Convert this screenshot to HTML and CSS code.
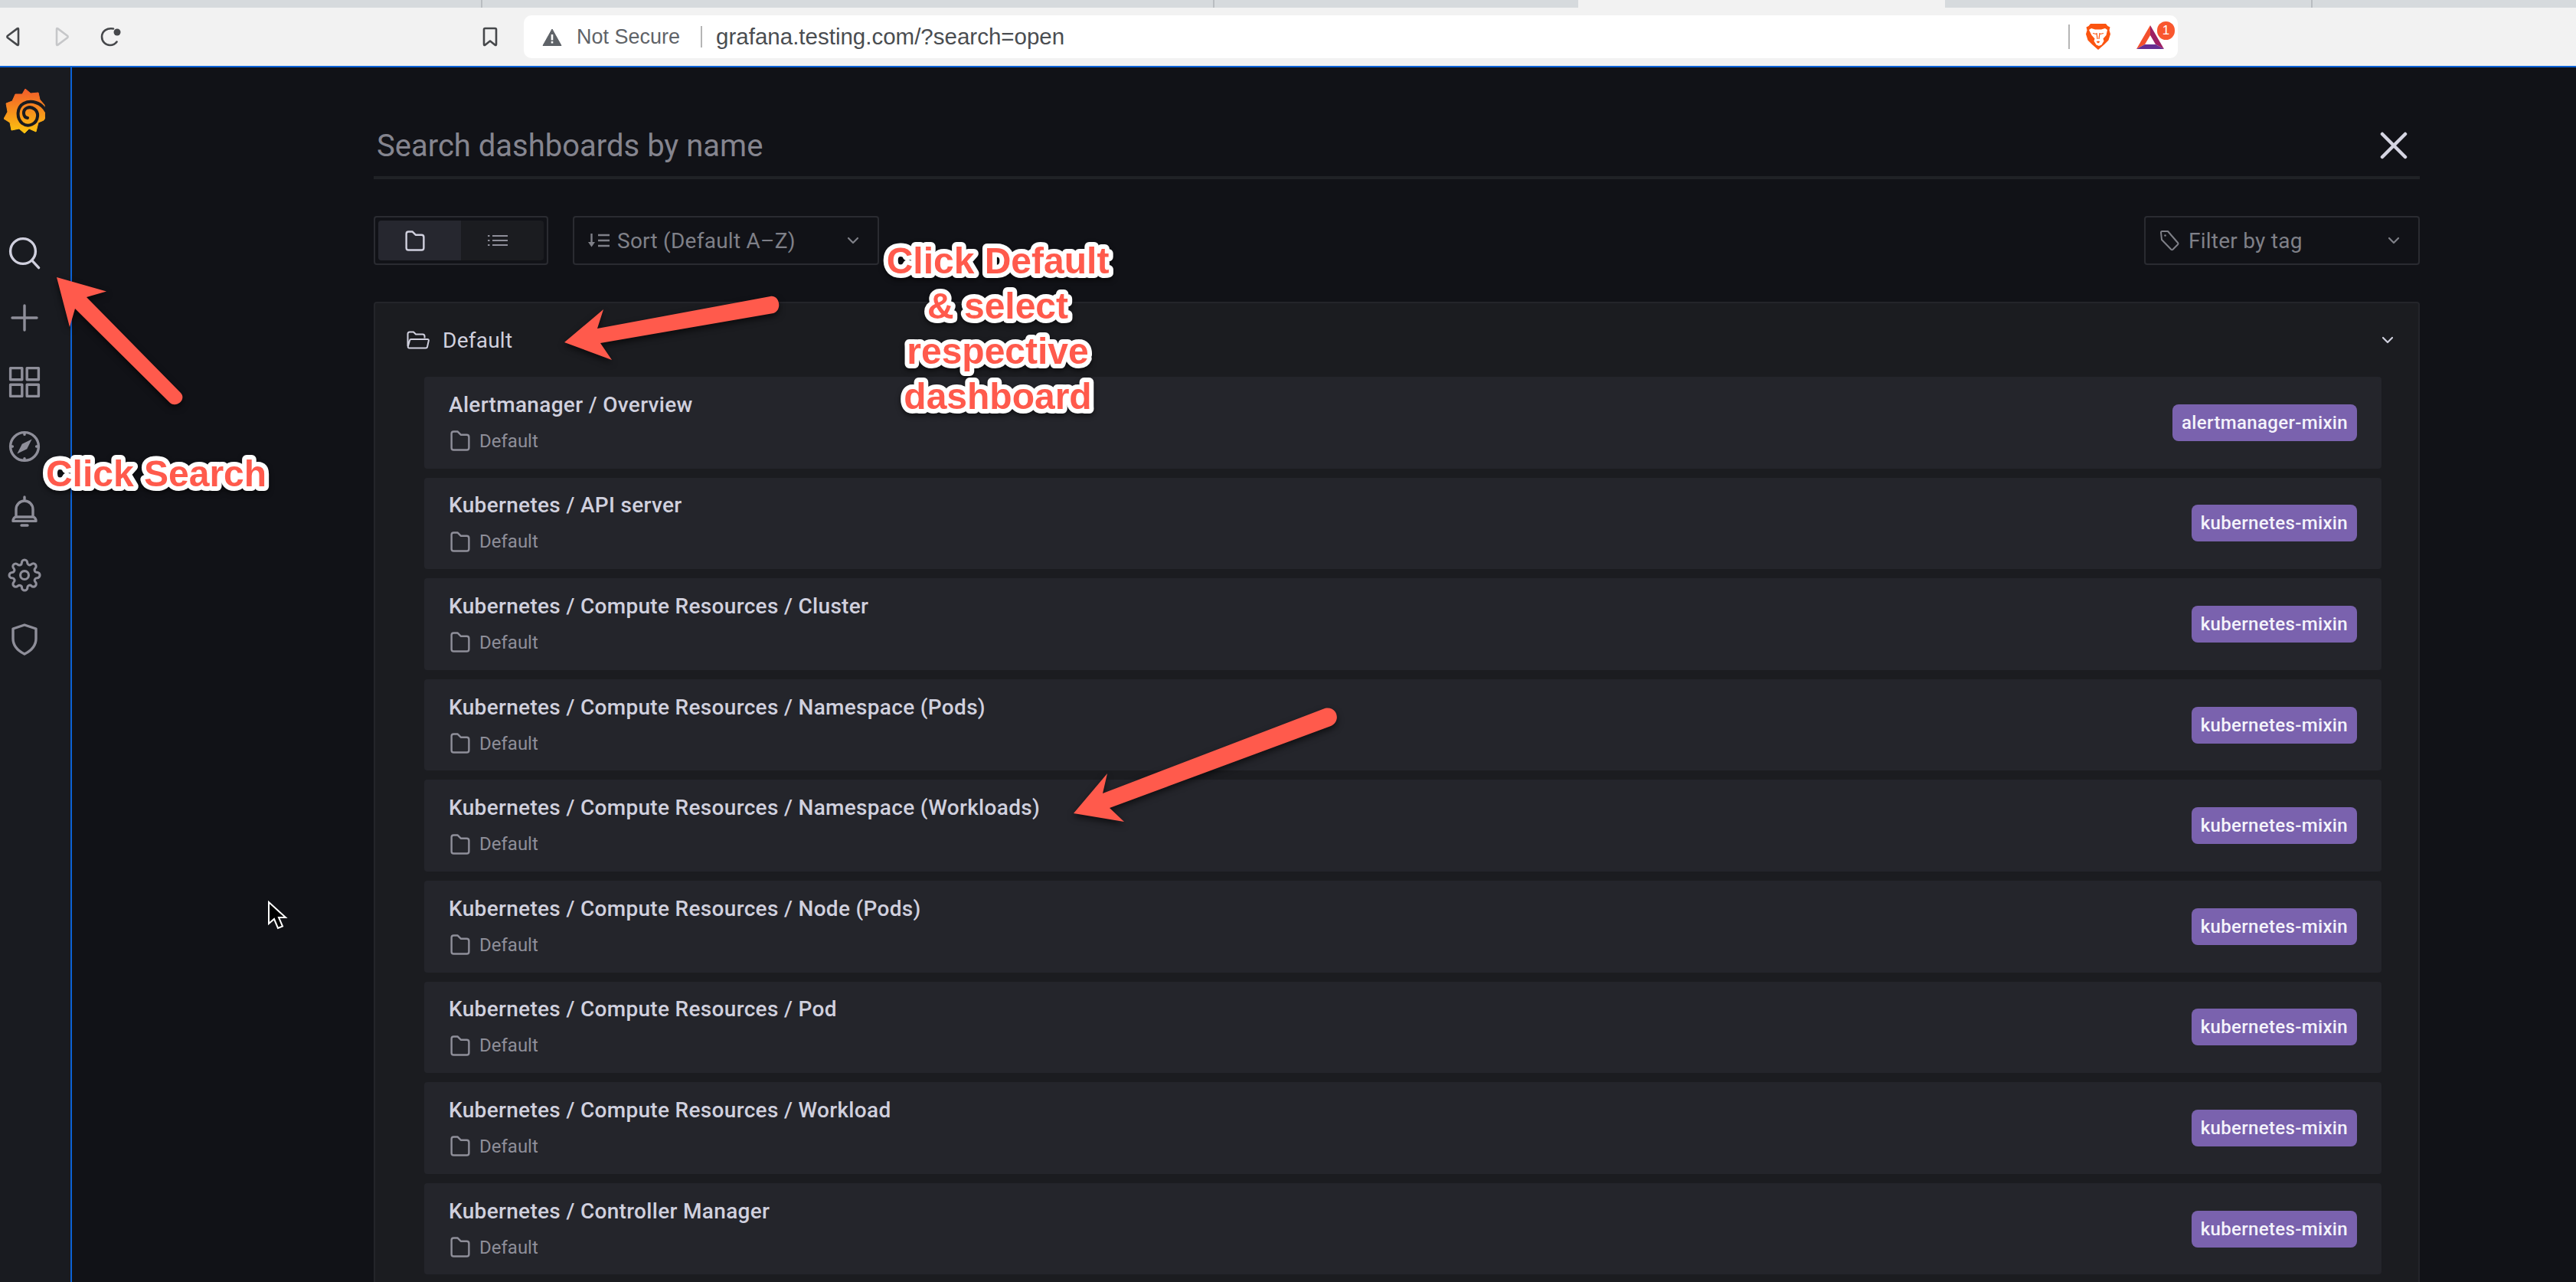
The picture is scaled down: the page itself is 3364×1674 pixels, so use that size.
FILE: index.html
```html
<!DOCTYPE html>
<html lang="en">
<head>
    <meta charset="UTF-8">
    <title>Grafana - Search dashboards</title>
    <link rel="stylesheet" href="styles.css">
</head>
<body>
    <svg class="defs" width="0" height="0">
        <symbol id="folder" viewBox="3 2.5 18 19">
            <path d="M4 5.500c0-1.200.8-2 2-2h3.500l3 3H18c1.200 0 2 .8 2 2v10c0 1.200-.8 2-2 2H6c-1.200 0-2-.8-2-2z" fill="none" stroke="currentColor" stroke-width="1.700" stroke-linejoin="round"/>
        </symbol>
        <symbol id="chevron" viewBox="0 0 16 10">
            <path d="M2 2l6 6 6-6" fill="none" stroke="currentColor" stroke-width="2.200" stroke-linecap="round" stroke-linejoin="round"/>
        </symbol>
    </svg>

    <!-- browser chrome -->
    <div class="tabstrip">
        <div class="tab tab-a"></div>
        <div class="tab tab-b"></div>
        <div class="tab tab-c"></div>
        <div class="tab tab-active"></div>
        <div class="tab tab-d"></div>
        <div class="tab tab-e"></div>
    </div>
    <div class="toolbar">
        <svg class="nav-icon back" viewBox="0 0 20 26"><path d="M17 3v20c0 1-.8 1.200-1.500.6L3 14.200c-.8-.7-.8-1.700 0-2.400L15.500 2.400C16.200 1.800 17 2 17 3z" fill="none" stroke="currentColor" stroke-width="2.600" stroke-linejoin="round"/></svg>
        <svg class="nav-icon forward" viewBox="0 0 20 26"><path d="M3 3v20c0 1 .8 1.200 1.500.6L17 14.200c.8-.7.8-1.700 0-2.400L4.500 2.400C3.800 1.800 3 2 3 3z" fill="none" stroke="currentColor" stroke-width="2.600" stroke-linejoin="round"/></svg>
        <svg class="nav-icon reload" viewBox="0 0 28 26"><path d="M17 2.500C9 1 2 5.500 2 13c0 6.500 5 11 10.500 11 4 0 7-1.500 9-4.500" fill="none" stroke="currentColor" stroke-width="2.600" stroke-linecap="round"/><circle cx="22" cy="7" r="4.500" fill="currentColor"/></svg>
        <svg class="nav-icon bookmark" viewBox="0 0 20 26"><path d="M2 3.500C2 2.500 2.500 2 3.500 2h13c1 0 1.500.5 1.500 1.500V23c0 1-.7 1.300-1.500.7L10 18.500l-6.500 5.200C2.700 24.300 2 24 2 23z" fill="none" stroke="currentColor" stroke-width="2.600" stroke-linejoin="round"/></svg>
        <div class="address-bar">
            <svg class="warn-icon" viewBox="0 0 26 23"><path d="M13 1L25 22.500H1z" fill="#5f6368" stroke="#5f6368" stroke-linejoin="round"/><path d="M11.700 8h2.600v7.500h-2.600zM11.700 17h2.600v2.600h-2.600z" fill="#fff"/></svg>
            <span class="not-secure">Not Secure</span>
            <span class="url-sep"></span>
            <span class="url">grafana.testing.com/?search=open</span>
            <span class="ext-sep"></span>
            <svg class="brave-icon" viewBox="0 0 32 36">
                <path d="M6 1h20l2.500 3 3 1.500-1 4 1.500 5-2.500 8-6 6-7.500 6.500-7.500-6.500-6-6L0 14.500l1.500-5-1-4L3.500 4z" fill="#fb5410"/>
                <path d="M7 7l5 1.500h8L25 7l3 2-1.500 7-4 4.500 1 3-3 5-3.500 1.500-3.500-1.500-3-5 1-3-4-4.500L4 9z" fill="#fff"/>
                <path d="M14 13l1 8M18 13l-1 8M9 13.500l4.500 1M23 13.500l-4.500 1" fill="none" stroke="#fb5410" stroke-width="1.200"/>
                <path d="M13.500 24.500l2.500 2 2.500-2-2.500-1z" fill="#fb5410"/>
            </svg>
            <div class="rewards">
                <svg class="bat-icon" viewBox="0 0 36 31">
                    <path d="M18 0L0 31l11-6 7-12z" fill="#f4502d"/>
                    <path d="M18 0v13l7 12 11 6z" fill="#9e1f63"/>
                    <path d="M11 25h14l11 6H0z" fill="#662d91"/>
                </svg>
                <span class="rewards-badge">1</span>
            </div>
        </div>
    </div>

    <div class="app">
        <nav class="sidebar">
            <svg class="logo" viewBox="5 6 54 59">
                <defs>
                    <linearGradient id="logoGrad" x1="0" y1="0" x2="0" y2="1">
                        <stop offset="0" stop-color="#f15b2a"/>
                        <stop offset="1" stop-color="#fcc30f"/>
                    </linearGradient>
                </defs>
                <path d="M33 6l7 6 10-1 2 9 6 7 1 17-2 3-7 3-3 12-9-4-6 6-7-6-10 2-2-10-8-5 5-9-2-11 8-3 4-9h9z" fill="url(#logoGrad)" stroke="url(#logoGrad)" stroke-linejoin="round"/>
                <path d="M60 35C54 24 41 20 31 25 22 30 21 44 29 51 37 57 48 52 49 42 50 34 42 28 35 31 29 34 30 43 36 44" fill="none" stroke="#191b20" stroke-width="4" stroke-linecap="round"/>
            </svg>
            <div class="nav-items">
                <svg class="side-icon active" viewBox="0 0 24 24"><circle cx="11" cy="10.500" r="8.200"/><path d="M17 16.700l4.300 4.600"/></svg>
                <svg class="side-icon" viewBox="0 0 24 24"><path d="M12 4v16M4 12h16"/></svg>
                <svg class="side-icon" viewBox="0 0 24 24"><rect x="2.800" y="2.800" width="7.600" height="7.600"/><rect x="13.600" y="2.800" width="7.600" height="7.600"/><rect x="2.800" y="13.600" width="7.600" height="7.600"/><rect x="13.600" y="13.600" width="7.600" height="7.600"/></svg>
                <svg class="side-icon" viewBox="0 0 24 24"><circle cx="12" cy="12" r="9.200"/><path d="M12 2.800v1.400M12 19.800v1.400M2.800 12h1.400M19.800 12h1.400"/><path class="solid" d="M16.800 7.200l-3.200 6.400-6.400 3.200 3.200-6.400z"/></svg>
                <svg class="side-icon" viewBox="0 0 24 24"><path d="M12 3v1.500M6.500 16v-5a5.500 5.500 0 0 1 11 0v5M4.500 18.700c0-1.500 1-2.700 2-2.700h11c1 0 2 1.200 2 2.700zM10 21.500h4"/></svg>
                <svg class="side-icon" viewBox="0 0 24 24"><g transform="translate(1.100 1.100) scale(.91)"><circle cx="12" cy="12" r="3"/><path d="M19.400 15a1.650 1.650 0 0 0 .33 1.820l.06.06a2 2 0 0 1 0 2.830 2 2 0 0 1-2.830 0l-.06-.06a1.650 1.650 0 0 0-1.820-.33 1.650 1.650 0 0 0-1 1.510V21a2 2 0 0 1-2 2 2 2 0 0 1-2-2v-.09A1.650 1.650 0 0 0 9 19.400a1.650 1.650 0 0 0-1.820.33l-.06.06a2 2 0 0 1-2.830 0 2 2 0 0 1 0-2.830l.06-.06a1.650 1.650 0 0 0 .33-1.820 1.650 1.650 0 0 0-1.510-1H3a2 2 0 0 1-2-2 2 2 0 0 1 2-2h.09A1.650 1.650 0 0 0 4.600 9a1.650 1.650 0 0 0-.33-1.820l-.06-.06a2 2 0 0 1 0-2.830 2 2 0 0 1 2.830 0l.06.06a1.650 1.650 0 0 0 1.820.33H9a1.650 1.650 0 0 0 1-1.510V3a2 2 0 0 1 2-2 2 2 0 0 1 2 2v.09a1.650 1.650 0 0 0 1 1.510 1.650 1.650 0 0 0 1.820-.33l.06-.06a2 2 0 0 1 2.830 0 2 2 0 0 1 0 2.830l-.06.06a1.650 1.650 0 0 0-.33 1.820V9a1.650 1.650 0 0 0 1.510 1H21a2 2 0 0 1 2 2 2 2 0 0 1-2 2h-.09a1.650 1.650 0 0 0-1.510 1z"/></g></svg>
                <svg class="side-icon" viewBox="0 0 24 24"><path d="M12 2.500l7.500 2.500v6.500c0 4.500-3.500 8-7.500 10-4-2-7.500-5.500-7.500-10V5z"/></svg>
            </div>
        </nav>

        <main class="search-page">
            <div class="search-head">
                <span class="search-placeholder">Search dashboards by name</span>
                <svg class="close-icon" viewBox="0 0 36 36"><path d="M3 3l30 30M33 3L3 33" fill="none" stroke="#d5d5e2" stroke-width="4.500" stroke-linecap="round"/></svg>
            </div>

            <div class="filters">
                <div class="layout-switch">
                    <div class="switch-btn switch-on">
                        <svg class="switch-icon"><use href="#folder"/></svg>
                    </div>
                    <div class="switch-btn">
                        <svg class="list-icon" viewBox="0 0 26 16"><path d="M6 2h20M6 8h20M6 14h20" stroke="currentColor" stroke-width="2.200"/><path d="M0 2h2.500M0 8h2.500M0 14h2.500" stroke="currentColor" stroke-width="2.200"/></svg>
                    </div>
                </div>
                <div class="select sort-select">
                    <svg class="sort-icon" viewBox="0 0 28 18"><path d="M4.500 0v13" stroke="currentColor" stroke-width="2.400"/><path d="M0 11h9l-4.500 6.500z" fill="currentColor"/><path d="M13 2h15M13 9h15M13 16h15" stroke="currentColor" stroke-width="2.400"/></svg>
                    <span>Sort (Default A–Z)</span>
                    <svg class="chev"><use href="#chevron"/></svg>
                </div>
                <div class="select tag-select">
                    <svg class="tag-icon" viewBox="0 0 26 28"><path d="M2 3.500C2 2.500 2.500 2 3.500 2H11l13 15c.6.700.6 1.500 0 2.200l-6.500 6.600c-.7.6-1.500.6-2.200 0L3 13z" fill="none" stroke="currentColor" stroke-width="2" stroke-linejoin="round"/><circle cx="7.500" cy="7.500" r="1.300" fill="currentColor"/></svg>
                    <span>Filter by tag</span>
                    <svg class="chev"><use href="#chevron"/></svg>
                </div>
            </div>

            <section class="folder-section">
                <div class="section-head">
                    <svg class="open-folder" viewBox="0 0 30 24"><path d="M1.500 20V4c0-1.500 1-2.500 2.500-2.500h5l3 3h9c1.500 0 2.500 1 2.500 2.500v2.500M6 11h21.500c1 0 1.500.7 1.300 1.700L27 21c-.2 1-1 1.500-2 1.500H3.500c-1.200 0-2-.8-1.700-2L4 12.500C4.200 11.500 5 11 6 11z" fill="none" stroke="currentColor" stroke-width="2" stroke-linejoin="round"/></svg>
                    <span class="section-title">Default</span>
                    <svg class="chev section-chev"><use href="#chevron"/></svg>
                </div>
                <div class="rows">
                    <div class="row">
                        <div class="row-text">
                            <div class="row-title">Alertmanager / Overview</div>
                            <div class="row-meta"><svg class="meta-icon"><use href="#folder"/></svg>Default</div>
                        </div>
                        <span class="tag">alertmanager-mixin</span>
                    </div>
                    <div class="row">
                        <div class="row-text">
                            <div class="row-title">Kubernetes / API server</div>
                            <div class="row-meta"><svg class="meta-icon"><use href="#folder"/></svg>Default</div>
                        </div>
                        <span class="tag">kubernetes-mixin</span>
                    </div>
                    <div class="row">
                        <div class="row-text">
                            <div class="row-title">Kubernetes / Compute Resources / Cluster</div>
                            <div class="row-meta"><svg class="meta-icon"><use href="#folder"/></svg>Default</div>
                        </div>
                        <span class="tag">kubernetes-mixin</span>
                    </div>
                    <div class="row">
                        <div class="row-text">
                            <div class="row-title">Kubernetes / Compute Resources / Namespace (Pods)</div>
                            <div class="row-meta"><svg class="meta-icon"><use href="#folder"/></svg>Default</div>
                        </div>
                        <span class="tag">kubernetes-mixin</span>
                    </div>
                    <div class="row">
                        <div class="row-text">
                            <div class="row-title">Kubernetes / Compute Resources / Namespace (Workloads)</div>
                            <div class="row-meta"><svg class="meta-icon"><use href="#folder"/></svg>Default</div>
                        </div>
                        <span class="tag">kubernetes-mixin</span>
                    </div>
                    <div class="row">
                        <div class="row-text">
                            <div class="row-title">Kubernetes / Compute Resources / Node (Pods)</div>
                            <div class="row-meta"><svg class="meta-icon"><use href="#folder"/></svg>Default</div>
                        </div>
                        <span class="tag">kubernetes-mixin</span>
                    </div>
                    <div class="row">
                        <div class="row-text">
                            <div class="row-title">Kubernetes / Compute Resources / Pod</div>
                            <div class="row-meta"><svg class="meta-icon"><use href="#folder"/></svg>Default</div>
                        </div>
                        <span class="tag">kubernetes-mixin</span>
                    </div>
                    <div class="row">
                        <div class="row-text">
                            <div class="row-title">Kubernetes / Compute Resources / Workload</div>
                            <div class="row-meta"><svg class="meta-icon"><use href="#folder"/></svg>Default</div>
                        </div>
                        <span class="tag">kubernetes-mixin</span>
                    </div>
                    <div class="row">
                        <div class="row-text">
                            <div class="row-title">Kubernetes / Controller Manager</div>
                            <div class="row-meta"><svg class="meta-icon"><use href="#folder"/></svg>Default</div>
                        </div>
                        <span class="tag">kubernetes-mixin</span>
                    </div>
                </div>
            </section>
        </main>
    </div>

    <!-- screenshot annotations, drawn over the page -->
    <svg class="annotations" viewBox="0 0 3364 1674">
        <g class="arrow">
            <path d="M74 362L139 380.500 113 388 236 513C244 522 230 533 222 526L98 403 91 427z"/>
            <path d="M737 447L788 404 780 429 1006 387C1018 385 1022 405 1010 409L784 448 799 470z"/>
            <path d="M1402 1062L1446 1010 1440 1036 1730 925C1746 921 1752 942 1738 948L1449 1055 1468 1073z"/>
        </g>
        <g class="callout">
            <text x="204" y="635">Click Search</text>
            <text x="1303" y="357">Click Default</text>
            <text x="1303" y="416">&amp; select</text>
            <text x="1303" y="475">respective</text>
            <text x="1303" y="534">dashboard</text>
        </g>
        <path class="cursor" d="M351 1178v28l7-6 5 12 6-2.500-5-11.500h9z"/>
    </svg>
</body>
</html>
```
FILE: styles.css
```css
* {
    box-sizing: border-box;
}

html, body {
    margin: 0;
    height: 100%;
}

body {
    position: relative;
    width: 3364px;
    height: 1674px;
    overflow: hidden;
    display: flex;
    flex-direction: column;
    background-color: #111217;
    font-family: Roboto, Arial, sans-serif;
}

.defs {
    position: absolute;
}

/* browser chrome */
.tabstrip {
    display: flex;
    height: 10px;
    background-color: #d6dadd;
    flex-shrink: 0;
}

.tab {
    border-right: 2px solid #b9bdc1;
}

.tab-a { width: 630px; }
.tab-b { width: 956px; }
.tab-c { width: 475px; border-right: none; }
.tab-active { width: 479px; background-color: #f2f2f2; border-right: none; }
.tab-d { width: 480px; }
.tab-e { flex: 1; border-right: none; }

.toolbar {
    display: flex;
    align-items: center;
    height: 78px;
    padding-left: 7px;
    background-color: #f2f2f2;
    border-bottom: 2px solid #0b62d6;
    flex-shrink: 0;
}

.nav-icon {
    width: 20px;
    height: 26px;
    flex-shrink: 0;
}

.back { color: #46484b; }
.forward { color: #c6c7c9; margin-left: 44px; }
.reload { color: #46484b; width: 28px; margin-left: 40px; }
.bookmark { color: #46484b; margin-left: 471px; }

.address-bar {
    display: flex;
    align-items: center;
    width: 2160px;
    height: 56px;
    margin-left: 34px;
    padding: 0 4px 0 24px;
    background-color: #fff;
    border-radius: 10px;
    font-family: "Liberation Sans", Arial, sans-serif;
}

.warn-icon {
    width: 26px;
    height: 23px;
    flex-shrink: 0;
}

.not-secure {
    margin-left: 19px;
    font-size: 27px;
    color: #5f6368;
}

.url-sep {
    width: 2px;
    height: 28px;
    margin-left: 27px;
    background-color: #b5b5b5;
}

.url {
    flex: 1;
    margin-left: 18px;
    font-size: 29.500px;
    color: #4a4d51;
}

.ext-sep {
    width: 2px;
    height: 32px;
    background-color: #b5b5b5;
}

.brave-icon {
    width: 32px;
    height: 36px;
    margin-left: 21px;
}

.rewards {
    position: relative;
    width: 50px;
    height: 36px;
    margin-left: 34px;
    margin-bottom: 4px;
}

.bat-icon {
    position: absolute;
    left: 0;
    top: 5px;
    width: 36px;
    height: 31px;
}

.rewards-badge {
    position: absolute;
    left: 27px;
    top: 0;
    width: 23px;
    height: 24px;
    border-radius: 12px;
    background-color: #f9572e;
    color: #fff;
    font-size: 17px;
    line-height: 24px;
    text-align: center;
}

/* app */
.app {
    display: flex;
    flex: 1;
    min-height: 0;
}

.sidebar {
    width: 94px;
    flex-shrink: 0;
    padding-top: 28px;
    background-color: #191b20;
    border-right: 2px solid #0b62d6;
}

.logo {
    display: block;
    width: 54px;
    height: 59px;
    margin-left: 5px;
}

.nav-items {
    display: flex;
    flex-direction: column;
    gap: 36px;
    margin-top: 132px;
    padding-left: 8px;
}

.side-icon {
    width: 48px;
    height: 48px;
    fill: none;
    stroke: #8e8e99;
    stroke-width: 1.700;
    stroke-linecap: round;
    stroke-linejoin: round;
}

.side-icon.active {
    stroke: #d0d0de;
}

.side-icon .solid {
    fill: #8e8e99;
    stroke: none;
}

.search-page {
    flex: 1;
    min-width: 0;
    display: flex;
    flex-direction: column;
    padding: 0 204px 0 394px;
}

.search-head {
    display: flex;
    align-items: center;
    justify-content: space-between;
    height: 146px;
    flex-shrink: 0;
    padding: 62px 16px 0 4px;
    border-bottom: 4px solid #202226;
}

.search-placeholder {
    font-size: 40px;
    color: #85858f;
}

.close-icon {
    width: 36px;
    height: 36px;
}

.filters {
    display: flex;
    gap: 32px;
    height: 64px;
    flex-shrink: 0;
    margin-top: 48px;
}

.layout-switch {
    display: flex;
    width: 228px;
    padding: 4px;
    border: 2px solid #2a2b31;
    border-radius: 4px;
}

.switch-btn {
    display: flex;
    align-items: center;
    justify-content: center;
    width: 108px;
    padding-right: 12px;
    background-color: #1b1c20;
    color: #8e8e99;
    border-radius: 0 4px 4px 0;
}

.switch-on {
    background-color: #26272f;
    color: #d0d0de;
    border-radius: 4px 0 0 4px;
}

.switch-icon {
    width: 26px;
    height: 27px;
}

.list-icon {
    width: 26px;
    height: 16px;
}

.select {
    display: flex;
    align-items: center;
    border: 2px solid #2a2b31;
    border-radius: 4px;
    font-size: 28px;
    letter-spacing: 0.25px;
    color: #7f8088;
}

.sort-select {
    width: 400px;
    padding: 0 24px 0 18px;
}

.sort-icon {
    width: 28px;
    height: 18px;
    margin-right: 10px;
}

.tag-select {
    width: 360px;
    margin-left: auto;
    padding: 0 24px 0 18px;
}

.tag-icon {
    width: 26px;
    height: 28px;
    margin-right: 12px;
}

.chev {
    width: 16px;
    height: 10px;
    margin-left: auto;
    color: #7f8088;
}

.folder-section {
    flex: 1;
    min-height: 0;
    overflow: hidden;
    margin-top: 48px;
    padding: 0 48px 0 64px;
    background-color: #1b1c20;
    border: 2px solid #24252a;
    border-bottom: none;
    border-radius: 4px 4px 0 0;
}

.section-head {
    display: flex;
    align-items: center;
    height: 96px;
    margin-left: -23px;
    color: #d0d0de;
}

.open-folder {
    width: 30px;
    height: 24px;
    margin-right: 17px;
}

.section-title {
    font-size: 28px;
    letter-spacing: 0.25px;
}

.section-chev {
    color: #d0d0de;
    margin-right: -16px;
}

.rows {
    display: flex;
    flex-direction: column;
    gap: 12px;
}

.row {
    display: flex;
    align-items: center;
    justify-content: space-between;
    flex-shrink: 0;
    height: 119.600px;
    padding: 0 32px;
    background-color: #24252b;
    border-radius: 4px;
}

.row-text {
    padding-top: 1px;
}

.row-title {
    font-size: 28px;
    font-weight: 500;
    line-height: 36px;
    letter-spacing: 0.32px;
    color: #d0d0de;
}

.row-meta {
    display: flex;
    align-items: center;
    margin-top: 11px;
    font-size: 24px;
    line-height: 36px;
    color: #8e8e99;
}

.meta-icon {
    width: 26px;
    height: 27px;
    margin: 0 12px 0 2px;
}

.tag {
    padding: 0 12px;
    height: 48px;
    line-height: 48px;
    font-size: 24px;
    font-weight: 500;
    letter-spacing: 0.34px;
    color: #f4f3fb;
    background-color: #7a62ae;
    border-radius: 8px;
}

/* annotations */
.annotations {
    position: absolute;
    top: 0;
    left: 0;
    width: 3364px;
    height: 1674px;
    pointer-events: none;
}

.arrow {
    fill: #ff5a4c;
    filter: drop-shadow(0 4px 4px rgba(0, 0, 0, 0.6));
}

.callout {
    font-family: "Liberation Sans", Arial, sans-serif;
    font-size: 48px;
    font-weight: 700;
    text-anchor: middle;
    fill: #ff5a4c;
    stroke: #fff;
    stroke-width: 12px;
    stroke-linejoin: round;
    paint-order: stroke;
    filter: drop-shadow(0 3px 3px rgba(0, 0, 0, 0.55));
}

.cursor {
    fill: #000;
    stroke: #fff;
    stroke-width: 2px;
}
```
